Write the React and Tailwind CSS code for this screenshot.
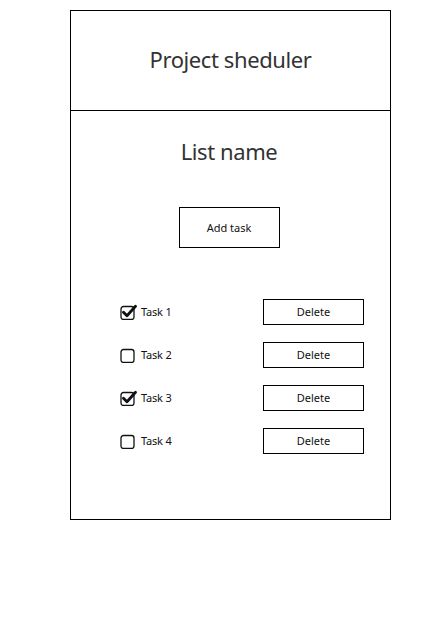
import React, { useState } from "react";

const Check = ({ checked }) => (
  <svg width="17" height="16" viewBox="0 0 17 16" className="shrink-0">
    <rect x="1" y="2.5" width="13" height="13" rx="2.5" fill="white" stroke="#111" strokeWidth="1.3" />
    {checked && (
      <path d="M3.5 8.2 L7 11.8 L15.5 2.2" fill="none" stroke="#111" strokeWidth="2.8" strokeLinecap="round" strokeLinejoin="round" />
    )}
  </svg>
);

export default function App() {
  const [tasks, setTasks] = useState([
    { name: "Task 1", done: true },
    { name: "Task 2", done: false },
    { name: "Task 3", done: true },
    { name: "Task 4", done: false },
  ]);

  const toggle = (i) =>
    setTasks(tasks.map((t, j) => (j === i ? { ...t, done: !t.done } : t)));

  return (
    <div className="w-[441px] h-[630px] bg-white pt-[10px] pl-[70px]" style={{ fontFamily: '"Noto Sans", "Open Sans", sans-serif' }}>
      <div className="w-[321px] h-[510px] border border-black flex flex-col">
        {/* Header */}
        <div className="h-[100px] border-b border-black flex items-center justify-center pb-[4px]">
          <h1 className="text-[22px] text-[#333] tracking-[-0.4px] leading-none">Project sheduler</h1>
        </div>

        {/* List */}
        <div className="flex flex-col items-center pt-[26px]">
          <h2 className="text-[22px] text-[#333] tracking-[-0.4px] leading-[28px] -ml-[3px]">List name</h2>
          <button className="mt-[42px] w-[101px] h-[41px] border border-black text-[11px] text-[#111] pt-[2px] -ml-[3px]">
            Add task
          </button>
        </div>

        <div className="flex flex-col gap-[17px] mt-[51px] pl-[49px] pr-[26px]">
          {tasks.map((t, i) => (
            <div key={i} className="flex items-center justify-between h-[26px]">
              <label className="flex items-center gap-[4px] cursor-pointer" onClick={() => toggle(i)}>
                <Check checked={t.done} />
                <span className="text-[11px] text-[#111] tracking-[-0.2px]">{t.name}</span>
              </label>
              <button className="w-[101px] h-[26px] border border-black text-[11px] text-[#111] pt-[1px]">
                Delete
              </button>
            </div>
          ))}
        </div>
      </div>
    </div>
  );
}
